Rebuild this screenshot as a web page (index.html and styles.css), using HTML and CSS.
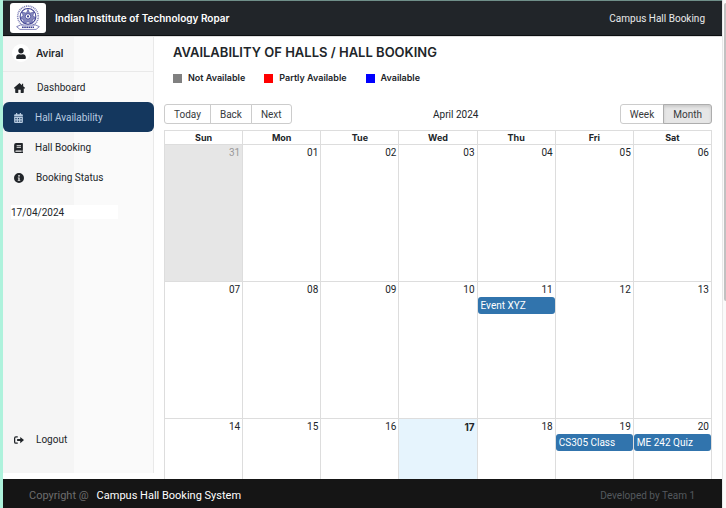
FILE: index.html
```html
<!DOCTYPE html>
<html lang="en">
<head>
<meta charset="utf-8">
<title>Campus Hall Booking</title>
<link rel="stylesheet" href="styles.css">
</head>
<body>
<div class="app">
  <header class="topbar">
    <span class="logo">
      <svg viewBox="0 0 48 48" width="26" height="26" aria-hidden="true">
        <g fill="none" stroke="#3b3e92">
          <circle cx="24" cy="21" r="19" stroke-width="3" stroke-dasharray="2 1.4" opacity=".65"/>
          <circle cx="24" cy="21" r="14.5" stroke-width="2"/>
          <path d="M24 8l3 7 8-2-2 7 6 4-7 3 0 7-8-3-8 3 0-7-7-3 6-4-2-7 8 2z" fill="#8588bd" stroke-width="1"/>
          <path d="M3 40l7-3h28l7 3-6 5H9z" fill="#fff" stroke-width="1.5" opacity=".8"/>
          <path d="M13 41h22" stroke-width="3" stroke-dasharray="3 1"/>
        </g>
        <circle cx="24" cy="21" r="5" fill="#fff" stroke="#3b3e92" stroke-width="1.5"/>
        <circle cx="24" cy="21" r="2" fill="#3b3e92"/>
      </svg>
    </span>
    <strong class="institute">Indian Institute of Technology Ropar</strong>
    <span class="product">Campus Hall Booking</span>
  </header>

  <div class="body">
    <aside class="sidebar">
      <div class="user">
        <span class="avatar">
          <svg viewBox="0 0 448 512" width="10" height="11" aria-hidden="true"><path d="M224 256c70.700 0 128-57.300 128-128S294.700 0 224 0 96 57.300 96 128s57.300 128 128 128zm89.600 32h-16.700c-22.200 10.200-46.900 16-72.900 16s-50.600-5.800-72.900-16h-16.700C60.200 288 0 348.200 0 422.400V464c0 26.500 21.500 48 48 48h352c26.500 0 48-21.500 48-48v-41.600c0-74.200-60.200-134.400-134.400-134.400z"/></svg>
        </span>
        <strong>Aviral</strong>
      </div>
      <nav class="menu">
        <a href="#dashboard"><svg viewBox="0 0 18 16" width="11" height="10" aria-hidden="true"><path d="M9 0L0 7.500V9h2v6a1 1 0 0 0 1 1h4v-5h4v5h4a1 1 0 0 0 1-1V9h2V7.500L15 5V1h-2v2.500z"/></svg>Dashboard</a>
        <a href="#availability" class="active" aria-current="page"><svg viewBox="0 0 14 16" width="9" height="10" aria-hidden="true"><path fill-rule="evenodd" d="M3 0h2v2h4V0h2v2h1.500A1.500 1.500 0 0 1 14 3.500V5H0V3.500A1.500 1.500 0 0 1 1.500 2H3zM0 6h14v8.500a1.500 1.500 0 0 1-1.500 1.500h-11A1.500 1.500 0 0 1 0 14.500zM2 8v2h2V8zm4 0v2h2V8zm4 0v2h2V8zM2 12v2h2v-2zm4 0v2h2v-2zm4 0v2h2v-2z"/></svg>Hall Availability</a>
        <a href="#booking"><svg viewBox="0 0 14 16" width="9" height="10" aria-hidden="true"><path fill-rule="evenodd" d="M3 0h10a1 1 0 0 1 1 1v10a1 1 0 0 1-.5.900v2.100a1 1 0 0 1-.5 2H3a3 3 0 0 1-3-3V3a3 3 0 0 1 3-3zm1 3v1.500h7V3zm0 3v1.500h7V6zM3 12a1 1 0 0 0 0 2h9v-2z"/></svg>Hall Booking</a>
        <a href="#status"><svg viewBox="0 0 16 16" width="10" height="10" aria-hidden="true"><path fill-rule="evenodd" d="M8 0a8 8 0 1 1 0 16A8 8 0 0 1 8 0zm0 3a1.400 1.400 0 1 0 0 2.800A1.400 1.400 0 0 0 8 3zM6 7v1.500h1V11H6v1.500h4V11H9V7z"/></svg>Booking Status</a>
      </nav>
      <input class="date" type="text" value="17/04/2024" aria-label="Date">
      <a class="logout" href="#logout"><svg viewBox="0 0 16 16" width="10" height="10" aria-hidden="true"><path d="M6 2H3a3 3 0 0 0-3 3v6a3 3 0 0 0 3 3h3v-2H3a1 1 0 0 1-1-1V5a1 1 0 0 1 1-1h3zM10 3v3.500H5v3h5V13l6-5z"/></svg>Logout</a>
    </aside>

    <main class="content">
      <h1>AVAILABILITY OF HALLS / HALL BOOKING</h1>
      <ul class="legend">
        <li class="none">Not Available</li>
        <li class="partly">Partly Available</li>
        <li class="free">Available</li>
      </ul>
      <div class="toolbar">
        <div class="group"><button type="button">Today</button><button type="button">Back</button><button type="button">Next</button></div>
        <span class="month">April 2024</span>
        <div class="group"><button type="button">Week</button><button type="button" class="on" aria-pressed="true">Month</button></div>
      </div>
      <table class="calendar">
        <thead>
          <tr><th>Sun</th><th>Mon</th><th>Tue</th><th>Wed</th><th>Thu</th><th>Fri</th><th>Sat</th></tr>
        </thead>
        <tbody>
          <tr><td class="off">31</td><td>01</td><td>02</td><td>03</td><td>04</td><td>05</td><td>06</td></tr>
          <tr><td>07</td><td>08</td><td>09</td><td>10</td><td>11<button type="button" class="event">Event XYZ</button></td><td>12</td><td>13</td></tr>
          <tr><td>14</td><td>15</td><td>16</td><td class="today">17</td><td>18</td><td>19<button type="button" class="event">CS305 Class</button></td><td>20<button type="button" class="event">ME 242 Quiz</button></td></tr>
        </tbody>
      </table>
    </main>
  </div>

  <footer class="footer">
    <span class="copy">Copyright @</span>
    <span class="name">Campus Hall Booking System</span>
    <span class="team">Developed by Team 1</span>
  </footer>
</div>
<div class="scrollbar"><div class="thumb"></div></div>
</body>
</html>
```
FILE: styles.css
```css
* { box-sizing: border-box; }

body {
  display: flex;
  height: 100vh;
  margin: 0;
  overflow: hidden;
  border-left: 3px solid #aef2dc;
  background: #fff;
  color: #212529;
  font: 10px/14px Roboto, "Liberation Sans", sans-serif;
}

a { color: inherit; text-decoration: none; }
button, input { font: inherit; color: inherit; }
svg { display: block; flex: none; fill: currentColor; }
strong, h1, .legend, th, .today { font-family: Inter, "Liberation Sans", sans-serif; }

.app {
  display: flex;
  flex: 1;
  flex-direction: column;
  min-width: 0;
  border-top: 1px solid #6f8f89;
}

.topbar {
  display: flex;
  flex: none;
  align-items: center;
  height: 35px;
  padding: 0 17px 0 7px;
  border-bottom: 1px solid #0b0e10;
  background: #212529;
  color: #fff;
}
.logo {
  display: grid;
  place-items: center;
  width: 36px;
  height: 30px;
  border-radius: 3px;
  background: #fff;
}
.institute { margin-left: 9px; font-weight: 600; }
.product { margin-left: auto; padding-top: 2px; color: #e9eaeb; }

.body {
  display: flex;
  flex: 1;
  min-height: 0;
  overflow: hidden;
  border-top: 1px solid #dedede;
}

.sidebar {
  display: flex;
  flex: none;
  flex-direction: column;
  width: 151px;
  margin-bottom: 6px;
  border-right: 1px solid #e9e9e9;
  background: linear-gradient(90deg, #f5f5f5 71px, #fafafa 71px);
}
.user {
  display: flex;
  align-items: center;
  gap: 6px;
  height: 35px;
  padding: 0 9px 2px;
  border-bottom: 1px solid #e9e9e9;
}
.user strong { font-weight: 600; }
.avatar {
  display: grid;
  place-items: center;
  width: 18px;
  height: 18px;
  border-radius: 50%;
  background: #fff;
}
.menu a, .logout {
  display: flex;
  align-items: center;
  gap: 12px;
  height: 30px;
  padding: 2px 12px 0 11px;
}
.menu .active {
  border-radius: 6px;
  margin-right: -1px;
  background: #14375e;
  color: #b8cbe0;
}
.date {
  width: 107px;
  height: 14px;
  margin: 13px 0 0 8px;
  padding: 2px 0 0;
  border: 0;
  background: #fff;
}
.logout { margin-top: auto; margin-bottom: 19px; }

.content { flex: 1; min-width: 0; padding: 6px 10px 0; }
h1 {
  margin: 0 0 0 9px;
  font-size: 13px;
  line-height: 18px;
  font-weight: 600;
}
.legend {
  display: flex;
  gap: 19px;
  margin: 10px 0 0 9px;
  padding: 0;
  list-style: none;
  font-size: 9px;
  font-weight: 600;
}
.legend li { display: flex; align-items: center; gap: 6px; }
.legend li::before { width: 9px; height: 9px; background: var(--swatch); content: ""; }
.none { --swatch: #808080; }
.partly { --swatch: #f00; }
.free { --swatch: #00f; }

.toolbar { display: flex; align-items: center; margin: 19px 0 6px; }
.group { display: flex; }
.month { flex: 1; padding-top: 2px; text-align: center; }
.group button {
  height: 20px;
  padding: 2px 9px 0;
  border: 1px solid #ccc;
  background: #fff;
  color: #373a3c;
}
.group button + button { margin-left: -1px; }
.group button:first-child { border-radius: 3px 0 0 3px; }
.group button:last-child { border-radius: 0 3px 3px 0; }
.group .on {
  border-color: #adadad;
  background: #e6e6e6;
  box-shadow: inset 0 2px 3px rgba(0, 0, 0, .12);
}

.calendar {
  width: 100%;
  border-collapse: collapse;
  table-layout: fixed;
}
.calendar th, .calendar td { border: 1px solid #ddd; }
.calendar th {
  height: 14px;
  padding: 0;
  font-size: 9px;
  line-height: 13px;
  font-weight: 700;
}
.calendar td {
  height: 137px;
  padding: 1px 2px 0 0;
  text-align: right;
  vertical-align: top;
}
.calendar .off { background: #e6e6e6; color: #999; }
.calendar .today { background: #e6f4fd; font-weight: 700; }
.event {
  display: block;
  width: calc(100% + 2px);
  height: 17px;
  padding: 0 3px;
  border: 0;
  border-radius: 3px;
  background: #3174ad;
  color: #fff;
  text-align: left;
}

.footer {
  display: flex;
  flex: none;
  align-items: center;
  height: 29px;
  padding: 4px 27px 0 26px;
  background: #151515;
}
.copy { color: #6d6d6d; }
.copy, .name { font-size: 11px; }
.name { margin-left: 8px; color: #fff; }
.team { margin-left: auto; color: #54595e; }

.scrollbar {
  width: 4px;
  padding: 3px 0 0 1px;
  border-left: 1px solid #e8e8e8;
  background: #fafafa;
}
.thumb { height: 59%; border-radius: 2px 0 0 2px; background: #c1c1c1; }
```
